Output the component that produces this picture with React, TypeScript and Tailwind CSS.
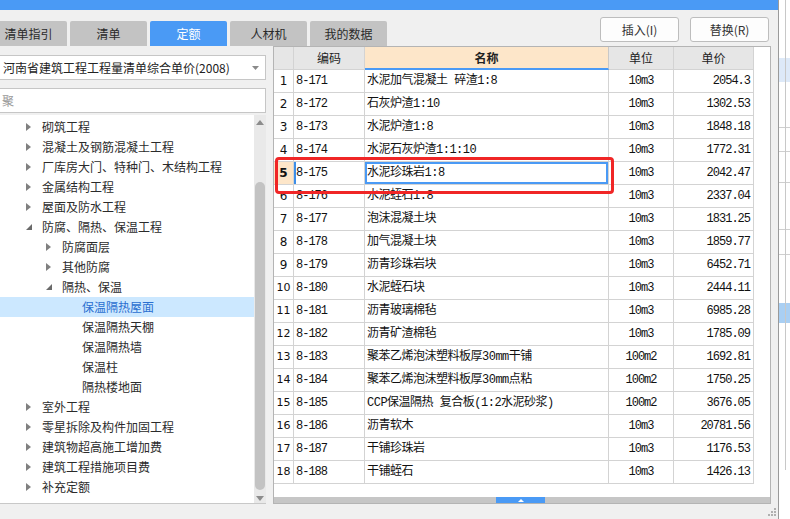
import React from "react";

const ui = { fontFamily: '"Noto Sans CJK SC", "Liberation Sans", sans-serif' };
const grid = { fontFamily: '"Liberation Mono", "Noto Sans CJK SC", monospace' };

const tabs = ["清单指引", "清单", "定额", "人材机", "我的数据"];

type Node = { label: string; level: number; state: "closed" | "open" | "leaf"; selected?: boolean };

const tree: Node[] = [
  { label: "砌筑工程", level: 1, state: "closed" },
  { label: "混凝土及钢筋混凝土工程", level: 1, state: "closed" },
  { label: "厂库房大门、特种门、木结构工程", level: 1, state: "closed" },
  { label: "金属结构工程", level: 1, state: "closed" },
  { label: "屋面及防水工程", level: 1, state: "closed" },
  { label: "防腐、隔热、保温工程", level: 1, state: "open" },
  { label: "防腐面层", level: 2, state: "closed" },
  { label: "其他防腐", level: 2, state: "closed" },
  { label: "隔热、保温", level: 2, state: "open" },
  { label: "保温隔热屋面", level: 3, state: "leaf", selected: true },
  { label: "保温隔热天棚", level: 3, state: "leaf" },
  { label: "保温隔热墙", level: 3, state: "leaf" },
  { label: "保温柱", level: 3, state: "leaf" },
  { label: "隔热楼地面", level: 3, state: "leaf" },
  { label: "室外工程", level: 1, state: "closed" },
  { label: "零星拆除及构件加固工程", level: 1, state: "closed" },
  { label: "建筑物超高施工增加费", level: 1, state: "closed" },
  { label: "建筑工程措施项目费", level: 1, state: "closed" },
  { label: "补充定额", level: 1, state: "closed" },
];

const rows: [string, string, string, string][] = [
  ["8-171", "水泥加气混凝土 碎渣1:8", "10m3", "2054.3"],
  ["8-172", "石灰炉渣1:10", "10m3", "1302.53"],
  ["8-173", "水泥炉渣1:8", "10m3", "1848.18"],
  ["8-174", "水泥石灰炉渣1:1:10", "10m3", "1772.31"],
  ["8-175", "水泥珍珠岩1:8", "10m3", "2042.47"],
  ["8-176", "水泥蛭石1:8", "10m3", "2337.04"],
  ["8-177", "泡沫混凝土块", "10m3", "1831.25"],
  ["8-178", "加气混凝土块", "10m3", "1859.77"],
  ["8-179", "沥青珍珠岩块", "10m3", "6452.71"],
  ["8-180", "水泥蛭石块", "10m3", "2444.11"],
  ["8-181", "沥青玻璃棉毡", "10m3", "6985.28"],
  ["8-182", "沥青矿渣棉毡", "10m3", "1785.09"],
  ["8-183", "聚苯乙烯泡沫塑料板厚30mm干铺", "100m2", "1692.81"],
  ["8-184", "聚苯乙烯泡沫塑料板厚30mm点粘", "100m2", "1750.25"],
  ["8-185", "CCP保温隔热 复合板(1:2水泥砂浆)", "100m2", "3676.05"],
  ["8-186", "沥青软木", "10m3", "20781.56"],
  ["8-187", "干铺珍珠岩", "10m3", "1176.53"],
  ["8-188", "干铺蛭石", "10m3", "1426.13"],
];

function Arrow({ state }: { state: Node["state"] }) {
  if (state === "closed")
    return (
      <svg width="5" height="8" viewBox="0 0 5 8">
        <path d="M0 0 L5 4 L0 8 Z" fill="#808080" />
      </svg>
    );
  if (state === "open")
    return (
      <svg width="6" height="6" viewBox="0 0 6 6">
        <path d="M6 0 L6 6 L0 6 Z" fill="#6a6a6a" />
      </svg>
    );
  return null;
}

function LeftPanel() {
  return (
    <div className="w-[266px] flex flex-col">
      <div className="mt-[9px] -ml-px h-[25px] bg-white border border-[#c6c6c6] flex items-center justify-between pl-[3px] pr-[6px] text-[12px] text-[#222]">
        <span>河南省建筑工程工程量清单综合单价(2008)</span>
        <svg width="7" height="4" viewBox="0 0 7 4">
          <path d="M0 0 L7 0 L3.5 4 Z" fill="#8a8a8a" />
        </svg>
      </div>
      <div className="mt-[8px] -ml-px h-[25px] bg-white border border-[#c6c6c6] flex items-center pl-[2px] text-[12px] text-[#9a9a9a]">
        聚
      </div>
      <div className="mt-[2px] flex-1 flex bg-white border-b border-[#c8c8c8]">
        <div className="flex-1 pt-[2px]">
          {tree.map((n) => (
            <div
              key={n.label}
              className={`h-[20px] flex items-center text-[12px] ${n.selected ? "bg-[#cce8ff] text-[#2a6fd0]" : "text-[#2b2b2b]"}`}
              style={{ paddingLeft: 26 + (n.level - 1) * 20 }}
            >
              <span className="w-[16px] flex items-center">
                <Arrow state={n.state} />
              </span>
              <span>{n.label}</span>
            </div>
          ))}
        </div>
        <div className="w-[12px] bg-[#e9e9e9] flex flex-col items-center">
          <svg className="mt-[5px]" width="8" height="5" viewBox="0 0 8 5">
            <path d="M0 5 L4 0 L8 5 Z" fill="#8c8c8c" />
          </svg>
          <div className="mt-[57px] w-[10px] h-[308px] rounded-[5px] bg-[#c3c3c3]" />
          <svg className="mt-[6px]" width="8" height="5" viewBox="0 0 8 5">
            <path d="M0 0 L8 0 L4 5 Z" fill="#8c8c8c" />
          </svg>
        </div>
      </div>
    </div>
  );
}

const cell = "h-[23px] border-r border-b border-[#d3d3d3] flex items-center shrink-0";

function Table() {
  return (
    <div className="relative ml-[7px] w-[498px] h-[458px] bg-white border border-[#b4b4b4] flex flex-col">
      <div className="flex text-[12px] text-[#222]">
        <div className={`${cell} w-[20px] bg-[#e6e6e6] border-[#c8c8c8]`} />
        <div className={`${cell} w-[71px] bg-[#e6e6e6] border-[#c8c8c8] justify-center`}>编码</div>
        <div className={`${cell} w-[244px] bg-[#fde6c9] border-r-[#c8c8c8] border-b-2 border-b-[#4a9af5] justify-center font-bold`}>名称</div>
        <div className={`${cell} w-[65px] bg-[#e6e6e6] border-[#c8c8c8] justify-center`}>单位</div>
        <div className={`${cell} w-[80px] bg-[#e6e6e6] border-[#c8c8c8] justify-center`}>单价</div>
      </div>
      {rows.map((r, i) => {
        const sel = i === 4;
        return (
          <div key={r[0]} className="flex text-[#111]" style={grid}>
            <div
              className={`${cell} w-[20px] justify-center ${sel ? "bg-[#fde6c9] font-bold" : ""}`}
              style={{ fontFamily: '"DejaVu Sans", sans-serif', fontSize: i >= 9 ? 11 : 12 }}
            >
              {i + 1}
            </div>
            <div className={`${cell} w-[71px] pl-[2px] text-[12px] tracking-[-1px] ${sel ? "shadow-[inset_2px_0_0_#3d8ee8]" : ""}`}>{r[0]}</div>
            <div className={`${cell} w-[244px] pl-[2px] text-[12px] tracking-[-0.5px] whitespace-nowrap overflow-hidden ${sel ? "shadow-[inset_0_0_0_2px_#4a9af5]" : ""}`}>{r[1]}</div>
            <div className={`${cell} w-[65px] justify-center text-[12px] tracking-[-1px]`}>{r[2]}</div>
            <div className={`${cell} w-[80px] justify-end pr-[3px] text-[12px] tracking-[-1px]`}>{r[3]}</div>
          </div>
        );
      })}
      <div className="flex-1" />
      <div className="h-[6px] bg-[#c6c6c6] flex">
        <div className="ml-[222px] w-[49px] h-full bg-[#4a9af5] flex items-center justify-center">
          <svg width="6" height="3" viewBox="0 0 6 3">
            <path d="M0 3 L3 0 L6 3 Z" fill="#ffffff" />
          </svg>
        </div>
      </div>
      <div className="absolute left-[1px] top-[110px] w-[339px] h-[37px] border-[3px] border-[#f02626] rounded-[4px]" />
    </div>
  );
}

function BackWindow() {
  const bands = [
    { h: 58, bg: "bg-white", line: false },
    { h: 24, bg: "bg-[#dde9f8]", line: false },
    { h: 46, bg: "bg-white", line: true },
    { h: 24, bg: "bg-white", line: true },
    { h: 31, bg: "bg-white", line: true },
    { h: 47, bg: "bg-white", line: true },
    { h: 25, bg: "bg-white", line: true },
    { h: 48, bg: "bg-white", line: false },
    { h: 20, bg: "bg-[#a9cff3]", line: false },
  ];
  return (
    <div className="relative w-[11px] h-full bg-white flex flex-col overflow-hidden">
      {bands.map((b, i) => (
        <div
          key={i}
          className={`${b.bg} shrink-0 ${b.line ? "border-b border-[#cfcfcf]" : ""}`}
          style={{ height: b.h }}
        />
      ))}
      <div className="absolute left-[6px] top-0 h-[470px] border-l border-[#c8c8c8]" />
    </div>
  );
}

export default function App() {
  return (
    <div className="w-[790px] h-[519px] overflow-hidden flex bg-white" style={ui}>
      <div className="w-[779px] h-full bg-[#f0f0f0] border-r border-[#9a9a9a] flex flex-col">
        <div className="h-[10px] bg-[#4a9af5]" />
        <div className="h-[36px] flex justify-between">
          <div className="flex items-end gap-[3px] -ml-[10px]">
            {tabs.map((t) => (
              <div
                key={t}
                className={`h-[25px] w-[77px] rounded-t-[2px] flex items-center justify-center text-[12px] ${t === "定额" ? "bg-[#4a9af5] text-white" : "bg-[#c3c3c3] text-[#2a2a2a]"}`}
              >
                {t}
              </div>
            ))}
          </div>
          <div className="flex gap-[11px] mt-[7px] mr-[9px]">
            {["插入(I)", "替换(R)"].map((b) => (
              <div key={b} className="w-[79px] h-[25px] bg-[#fdfdfd] border border-[#bdbdbd] rounded-[3px] flex items-center justify-center text-[12px] text-[#333]">
                {b}
              </div>
            ))}
          </div>
        </div>
        <div className="flex h-[458px]">
          <LeftPanel />
          <Table />
        </div>
        <div className="flex-1 flex justify-end items-end pr-[2px] pb-[3px]">
          <svg width="8" height="8" viewBox="0 0 8 8">
            <rect x="6" y="0" width="2" height="2" fill="#b0b0b0" />
            <rect x="3" y="3" width="2" height="2" fill="#b0b0b0" />
            <rect x="6" y="3" width="2" height="2" fill="#b0b0b0" />
            <rect x="0" y="6" width="2" height="2" fill="#b0b0b0" />
            <rect x="3" y="6" width="2" height="2" fill="#b0b0b0" />
            <rect x="6" y="6" width="2" height="2" fill="#b0b0b0" />
          </svg>
        </div>
      </div>
      <BackWindow />
    </div>
  );
}
